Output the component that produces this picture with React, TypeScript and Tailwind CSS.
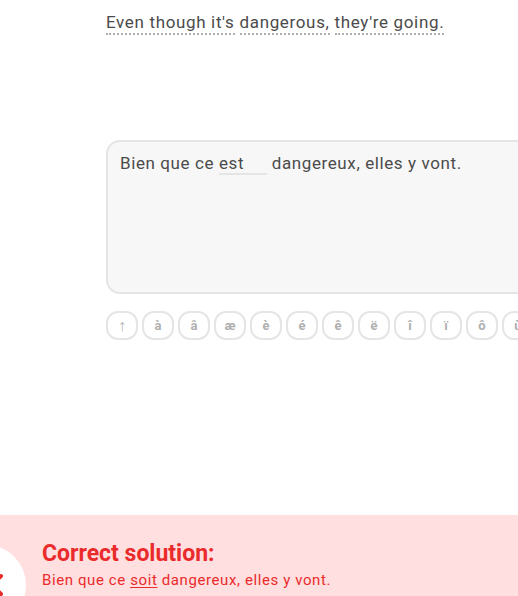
import React from "react";

const keys = ["↑", "à", "â", "æ", "è", "é", "ê", "ë", "î", "ï", "ô", "ù", "û"];

export default function App() {
  return (
    <div
      className="relative h-[596px] w-[518px] overflow-hidden bg-white"
      style={{ fontFamily: "Roboto, 'Liberation Sans', sans-serif" }}
    >
      <div className="pl-[106px] pt-[11px]">
        <p className="flex gap-[5px] whitespace-nowrap text-[17px] leading-[22px] tracking-[0.65px] text-[#4b4b4b]">
          <span className="border-b-2 border-dotted border-[#afafaf]">Even though it's</span>
          <span className="border-b-2 border-dotted border-[#afafaf]">dangerous,</span>
          <span className="border-b-2 border-dotted border-[#afafaf]">they're going.</span>
        </p>

        <div className="mt-[105px] h-[154px] w-[560px] rounded-[14px] border-2 border-[#e5e5e5] bg-[#f7f7f7] px-[12px] pt-[9px]">
          <p className="flex items-baseline whitespace-nowrap text-[17px] leading-[24px] tracking-[0.6px] text-[#4b4b4b]">
            <span>Bien que ce&nbsp;</span>
            <span className="inline-block w-[48px] border-b-2 border-[#e5e5e5] leading-[20px]">est</span>
            <span>&nbsp;dangereux, elles y vont.</span>
          </p>
        </div>

        <div className="mt-[17px] flex gap-[4px]">
          {keys.map((k) => (
            <div
              key={k}
              className="flex h-[29px] w-[32px] shrink-0 items-center justify-center rounded-[12px] border-2 border-[#e5e5e5] text-[13px] font-bold text-[#afafaf]"
            >
              {k === "↑" ? <span className="text-[16px] font-light">↑</span> : k}
            </div>
          ))}
        </div>
      </div>

      <div className="absolute bottom-0 left-0 h-[81px] w-full bg-[#ffdfe0]">
        <div className="absolute left-[-54px] top-[30px] flex h-[80px] w-[80px] items-center justify-end rounded-full bg-white pr-[21px]">
          <svg width="26" height="26" viewBox="0 0 26 26">
            <path d="M4 4 L22 22 M22 4 L4 22" stroke="#ea2b2b" strokeWidth="4" strokeLinecap="round" />
          </svg>
        </div>
        <div className="pl-[42px] pt-[25px]">
          <h2 className="text-[23px] font-bold leading-[28px] text-[#ea2b2b]">Correct solution:</h2>
          <p className="mt-[2px] text-[15px] leading-[20px] tracking-[0.6px] text-[#ea2b2b]">
            Bien que ce <span className="underline underline-offset-2">soit</span> dangereux, elles y vont.
          </p>
        </div>
      </div>
    </div>
  );
}
